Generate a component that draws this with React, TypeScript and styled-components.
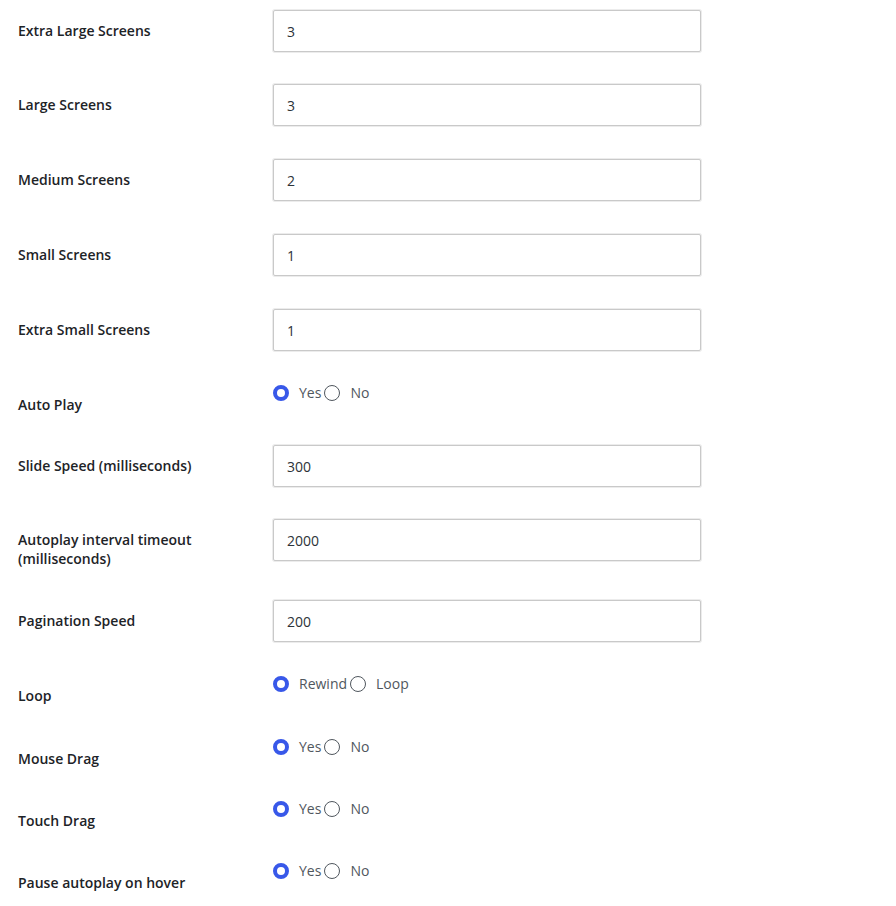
import React from 'react'
import styled, { createGlobalStyle } from 'styled-components'

type Field =
	| { kind: 'text'; label: string; value: string; h: number }
	| { kind: 'radio'; label: string; options: string[]; h: number }

const fields: Field[] = [
	{ kind: 'text', label: 'Extra Large Screens', value: '3', h: 74 },
	{ kind: 'text', label: 'Large Screens', value: '3', h: 75 },
	{ kind: 'text', label: 'Medium Screens', value: '2', h: 75 },
	{ kind: 'text', label: 'Small Screens', value: '1', h: 75 },
	{ kind: 'text', label: 'Extra Small Screens', value: '1', h: 75 },
	{ kind: 'radio', label: 'Auto Play', options: ['Yes', 'No'], h: 61 },
	{ kind: 'text', label: 'Slide Speed (milliseconds)', value: '300', h: 74 },
	{
		kind: 'text',
		label: 'Autoplay interval timeout (milliseconds)',
		value: '2000',
		h: 81,
	},
	{ kind: 'text', label: 'Pagination Speed', value: '200', h: 75 },
	{ kind: 'radio', label: 'Loop', options: ['Rewind', 'Loop'], h: 63 },
	{ kind: 'radio', label: 'Mouse Drag', options: ['Yes', 'No'], h: 62 },
	{ kind: 'radio', label: 'Touch Drag', options: ['Yes', 'No'], h: 62 },
	{ kind: 'radio', label: 'Pause autoplay on hover', options: ['Yes', 'No'], h: 54 },
]

export default function App() {
	return (
		<>
			<GlobalStyle />
			<Form>
				{fields.map((field) => (
					<Row key={field.label} $h={field.h}>
						<Label>{field.label}</Label>
						<Cell>
							{field.kind == 'text' && (
								<TextInput type="text" defaultValue={field.value} />
							)}
							{field.kind == 'radio' && (
								<RadioGroup>
									{field.options.map((opt, i) => (
										<RadioLabel key={opt}>
											<Radio
												type="radio"
												name={field.label}
												defaultChecked={i == 0}
											/>
											{opt}
										</RadioLabel>
									))}
								</RadioGroup>
							)}
						</Cell>
					</Row>
				))}
			</Form>
		</>
	)
}

const GlobalStyle = createGlobalStyle`
	body {
		margin: 0;
		background: #fff;
		font-family: "Open Sans", "Noto Sans", sans-serif;
		color: #1d2327;
	}
`

const Form = styled.div`
	padding-left: 18px;
	width: 683px;
`

const Row = styled.div<{ $h: number }>`
	display: grid;
	grid-template-columns: 255px 1fr;
	align-items: start;
	min-height: ${(p) => p.$h}px;
`

const Label = styled.div`
	padding: 21px 10px 0 0;
	font-size: 14px;
	font-weight: 600;
	line-height: 19px;
	letter-spacing: 0;
	color: #1d2327;
	max-width: 200px;
`

const Cell = styled.div`
	padding-top: 10px;
`

const TextInput = styled.input`
	box-sizing: border-box;
	width: 428px;
	height: 42px;
	padding: 0 13px;
	border: 1px solid #c9c9c9;
	border-radius: 2px;
	box-shadow: 0 0 0 1px #ececec;
	font-family: "Open Sans", "Noto Sans", sans-serif;
	font-size: 14px;
	color: #2c3338;
	background: #fff;
	outline: none;
`

const RadioGroup = styled.div`
	display: flex;
	align-items: center;
	height: 18px;
`

const RadioLabel = styled.label`
	display: flex;
	align-items: center;
	margin-right: 3px;
	font-size: 14px;
	color: #50575e;
	line-height: 18px;
`

const Radio = styled.input`
	appearance: none;
	box-sizing: border-box;
	width: 16px;
	height: 16px;
	margin: 0 10px 0 0;
	border: 1.5px solid #50575e;
	border-radius: 50%;
	background: #fff;

	&:checked {
		border: 4.5px solid #3858e9;
	}
`
